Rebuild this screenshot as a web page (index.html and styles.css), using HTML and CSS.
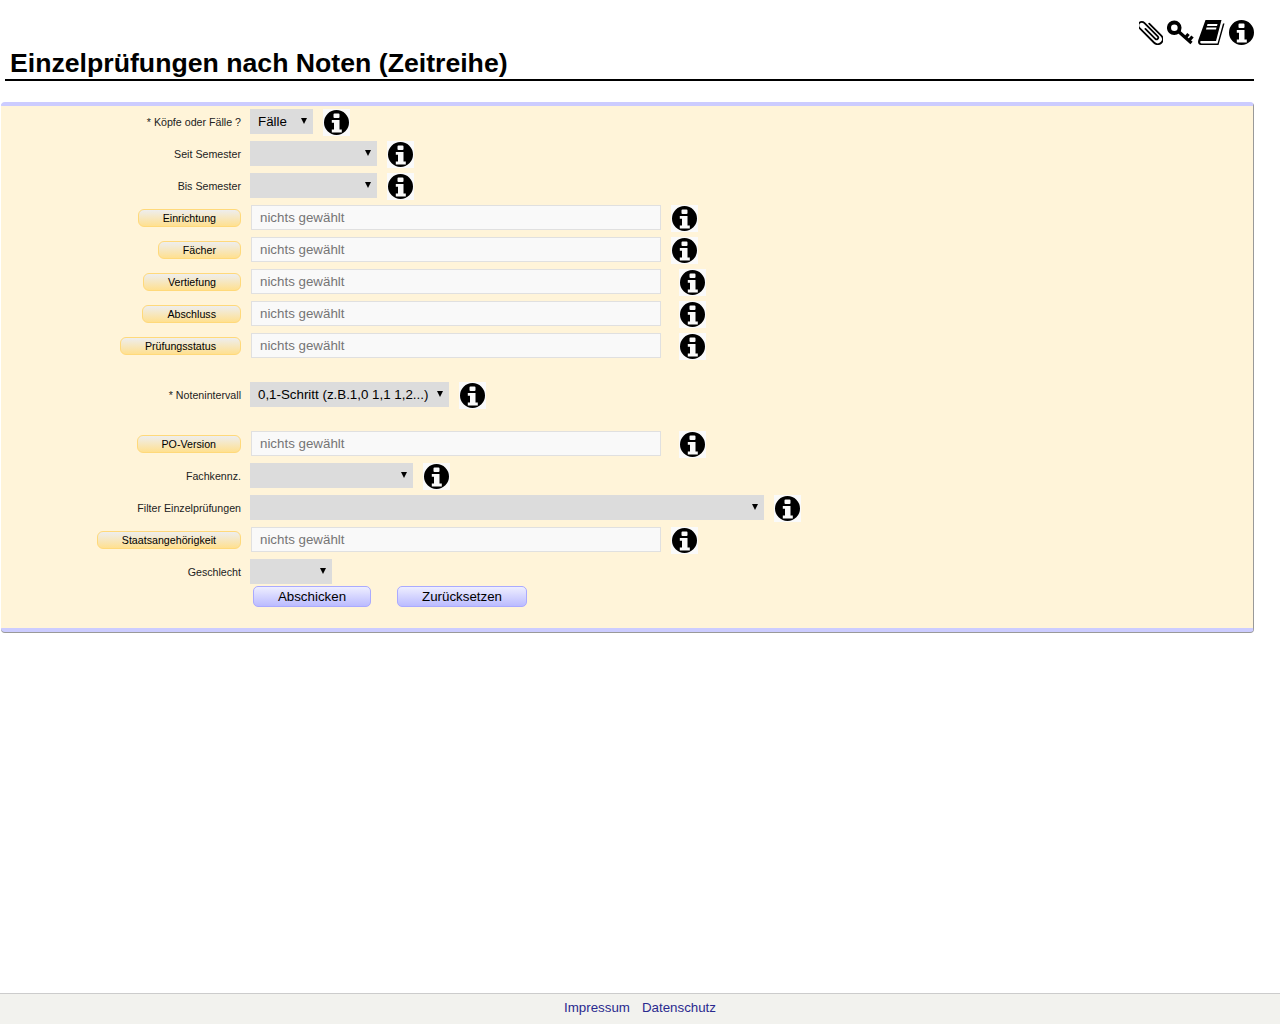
FILE: index.html
```html
<!DOCTYPE html>
<html lang="de">
<head>
<meta charset="utf-8">
<title>Einzelprüfungen nach Noten (Zeitreihe)</title>
<link rel="stylesheet" href="styles.css">
</head>
<body>
<svg class="defs" width="0" height="0" aria-hidden="true">
  <symbol id="info" viewBox="0 0 27 27">
    <path fill-rule="evenodd" d="M13.500 1a12.500 12.500 0 1 0 0 25a12.500 12.500 0 1 0 0-25zM11.500 4.500h4a1 1 0 0 1 1 1v2.500a1 1 0 0 1-1 1h-4a1 1 0 0 1-1-1v-2.500a1 1 0 0 1 1-1zM8.800 11h7.700v9.500h2.300v3H8.800v-3h2.200v-6.800H8.800z"/>
  </symbol>
  <symbol id="clip" viewBox="0 0 24 25">
    <g transform="rotate(-45 12 12.500)" fill="none" stroke="#000" stroke-width="1.800" stroke-linecap="round">
      <path d="M17 5V22a5 5 0 0 1-10 0V1a3.500 3.500 0 0 1 7 0V20a1.700 1.700 0 0 1-3.400 0V6"/>
    </g>
  </symbol>
  <symbol id="key" viewBox="0 0 27 24">
    <path fill-rule="evenodd" d="M7.300 0a7.300 7.300 0 1 1-0.100 14.600a7.300 7.300 0 0 1 0.100-14.600zM7.300 4a3.300 3.300 0 1 0 0.100 6.600a3.300 3.300 0 0 0-0.100-6.600z"/>
    <g fill="none" stroke="#000" stroke-width="3.200">
      <path d="M11 10.500L24.500 22.500"/>
      <path d="M18.500 17L21.500 13.500"/>
      <path d="M22 20L25.500 16"/>
    </g>
  </symbol>
  <symbol id="book" viewBox="0 0 28 25">
    <path d="M7.500 0H23.500L18 21H3.500C1.500 21 2 23.500 3.500 23.500H19.500L25 3.500H26.500L20.500 25H3C0 25-.5 22 .5 19.500z"/>
    <path fill="#fff" d="M9.500 4H19.500L19 6H9zM8.500 7.500H18.500L18 9.500H8z"/>
  </symbol>
</svg>
<main class="page">
  <header class="head">
    <div class="tools">
      <svg class="tool tool-clip"><use href="#clip"/></svg>
      <svg class="tool tool-key"><use href="#key"/></svg>
      <svg class="tool tool-book"><use href="#book"/></svg>
      <svg class="tool tool-info"><use href="#info"/></svg>
    </div>
    <h1 class="title">Einzelprüfungen nach Noten (Zeitreihe)</h1>
  </header>
  <form class="panel">
    <div class="row">
      <div class="lab">* Köpfe oder Fälle ?</div>
      <div class="sel w63"><select><option>Fälle</option></select></div>
      <svg class="info"><use href="#info"/></svg>
    </div>
    <div class="row">
      <div class="lab">Seit Semester</div>
      <div class="sel w127"><select></select></div>
      <svg class="info"><use href="#info"/></svg>
    </div>
    <div class="row">
      <div class="lab">Bis Semester</div>
      <div class="sel w127"><select></select></div>
      <svg class="info"><use href="#info"/></svg>
    </div>
    <div class="row">
      <div class="lab"><button type="button" class="pick">Einrichtung</button></div>
      <input class="txt" placeholder="nichts gewählt">
      <svg class="info"><use href="#info"/></svg>
    </div>
    <div class="row">
      <div class="lab"><button type="button" class="pick">Fächer</button></div>
      <input class="txt" placeholder="nichts gewählt">
      <svg class="info"><use href="#info"/></svg>
    </div>
    <div class="row">
      <div class="lab"><button type="button" class="pick">Vertiefung</button></div>
      <input class="txt" placeholder="nichts gewählt">
      <svg class="info far"><use href="#info"/></svg>
    </div>
    <div class="row">
      <div class="lab"><button type="button" class="pick">Abschluss</button></div>
      <input class="txt" placeholder="nichts gewählt">
      <svg class="info far"><use href="#info"/></svg>
    </div>
    <div class="row">
      <div class="lab"><button type="button" class="pick">Prüfungsstatus</button></div>
      <input class="txt" placeholder="nichts gewählt">
      <svg class="info far"><use href="#info"/></svg>
    </div>
    <div class="row spaced">
      <div class="lab">* Notenintervall</div>
      <div class="sel w199"><select><option>0,1-Schritt (z.B.1,0 1,1 1,2...)</option></select></div>
      <svg class="info"><use href="#info"/></svg>
    </div>
    <div class="row">
      <div class="lab"><button type="button" class="pick">PO-Version</button></div>
      <input class="txt" placeholder="nichts gewählt">
      <svg class="info far"><use href="#info"/></svg>
    </div>
    <div class="row">
      <div class="lab">Fachkennz.</div>
      <div class="sel w163"><select></select></div>
      <svg class="info"><use href="#info"/></svg>
    </div>
    <div class="row">
      <div class="lab">Filter Einzelprüfungen</div>
      <div class="sel w514"><select></select></div>
      <svg class="info"><use href="#info"/></svg>
    </div>
    <div class="row">
      <div class="lab"><button type="button" class="pick">Staatsangehörigkeit</button></div>
      <input class="txt" placeholder="nichts gewählt">
      <svg class="info"><use href="#info"/></svg>
    </div>
    <div class="row last">
      <div class="lab">Geschlecht</div>
      <div class="sel w82"><select></select></div>
    </div>
    <div class="actions">
      <button type="button" class="act a1">Abschicken</button>
      <button type="button" class="act a2">Zurücksetzen</button>
    </div>
  </form>
</main>
<footer class="foot">
  <a href="#">Impressum</a>
  <a href="#">Datenschutz</a>
</footer>
</body>
</html>
```
FILE: styles.css
```css
* { box-sizing: border-box; }
html, body { margin: 0; height: 100%; }
body {
  display: flex;
  flex-direction: column;
  height: 1024px;
  overflow: hidden;
  background: #fff;
  font-family: "Liberation Sans", Arial, sans-serif;
  color: #000;
}
.defs { position: absolute; }
.page { flex: 1; padding: 20px 26px 0 1px; }
.head { margin-left: 4px; }
.tools { display: flex; justify-content: flex-end; height: 25px; }
.tool { display: block; height: 25px; }
.tool-clip { width: 24px; margin-right: 4px; }
.tool-key { width: 27px; margin-right: 4px; }
.tool-book { width: 28px; margin-right: 2px; }
.tool-info { width: 27px; height: 27px; margin: -1px -1px 0 0; }
.title {
  margin: 0;
  padding: 3px 0 0 5px;
  height: 36px;
  border-bottom: 2px solid #000;
  font-size: 26.67px;
  line-height: 30px;
  font-weight: 700;
}
.panel {
  margin-top: 21px;
  height: 530px;
  background: #fff4d9;
  border-top: 4px solid #ccccff;
  border-bottom: 4px solid #ccccff;
  border-right: 1px solid #999;
  border-radius: 4px;
  box-shadow: 0 1px 0 #999;
}
.row { display: flex; align-items: flex-start; height: 32px; padding-top: 3px; }
.row.spaced { height: 66px; padding-top: 20px; }
.row.last { height: 28px; }
.lab {
  flex: none;
  display: flex;
  align-items: center;
  justify-content: flex-end;
  width: 240px;
  height: 25px;
  padding-top: 1px;
  margin-right: 9px;
  font-size: 10.67px;
  color: #222;
}
.pick {
  height: 18px;
  padding: 0 24px;
  font: 10.67px "Liberation Sans", Arial, sans-serif;
  color: #000;
  border: 1px solid #ffd97a;
  border-radius: 6px;
  background: linear-gradient(#eeeeee, #ffe090);
}
.sel { position: relative; flex: none; height: 25px; }
.sel::after {
  content: "";
  position: absolute;
  top: 9px;
  right: 6px;
  border-left: 3px solid transparent;
  border-right: 3px solid transparent;
  border-top: 6px solid #000;
}
.sel select {
  display: block;
  width: 100%;
  height: 25px;
  padding: 0 8px;
  border: 0;
  border-radius: 0;
  appearance: none;
  background: #dcdcdc;
  font: 13.33px "Liberation Sans", Arial, sans-serif;
  color: #000;
}
.w63 { width: 63px; }
.w82 { width: 82px; }
.w127 { width: 127px; }
.w163 { width: 163px; }
.w199 { width: 199px; }
.w514 { width: 514px; }
.txt {
  flex: none;
  width: 410px;
  height: 25px;
  margin-left: 1px;
  padding: 0 8px;
  border: 1px solid #e0e0e0;
  background: #f9f9f9;
  font: 13.33px "Liberation Sans", Arial, sans-serif;
}
.txt::placeholder { color: #757575; opacity: 1; }
.info {
  flex: none;
  display: block;
  width: 27px;
  height: 27px;
  margin-left: 10px;
  background: #fafafa;
}
.info.far { margin-left: 18px; }
.actions { display: flex; padding-left: 252px; margin-top: 2px; }
.act {
  height: 21px;
  padding: 0;
  font: 13.33px "Liberation Sans", Arial, sans-serif;
  color: #000;
  border: 1px solid #aaaaff;
  border-radius: 5px;
  background: linear-gradient(#eeeeff, #bbbbff);
}
.a1 { width: 118px; margin-right: 26px; }
.a2 { width: 130px; }
.foot {
  flex: none;
  height: 31px;
  display: flex;
  justify-content: center;
  gap: 12px;
  padding-top: 6px;
  border-top: 1px solid #cccccc;
  background: #f2f2ee;
  font-size: 13.33px;
  line-height: 15px;
}
.foot a { color: #2a2a8e; text-decoration: none; }
```
